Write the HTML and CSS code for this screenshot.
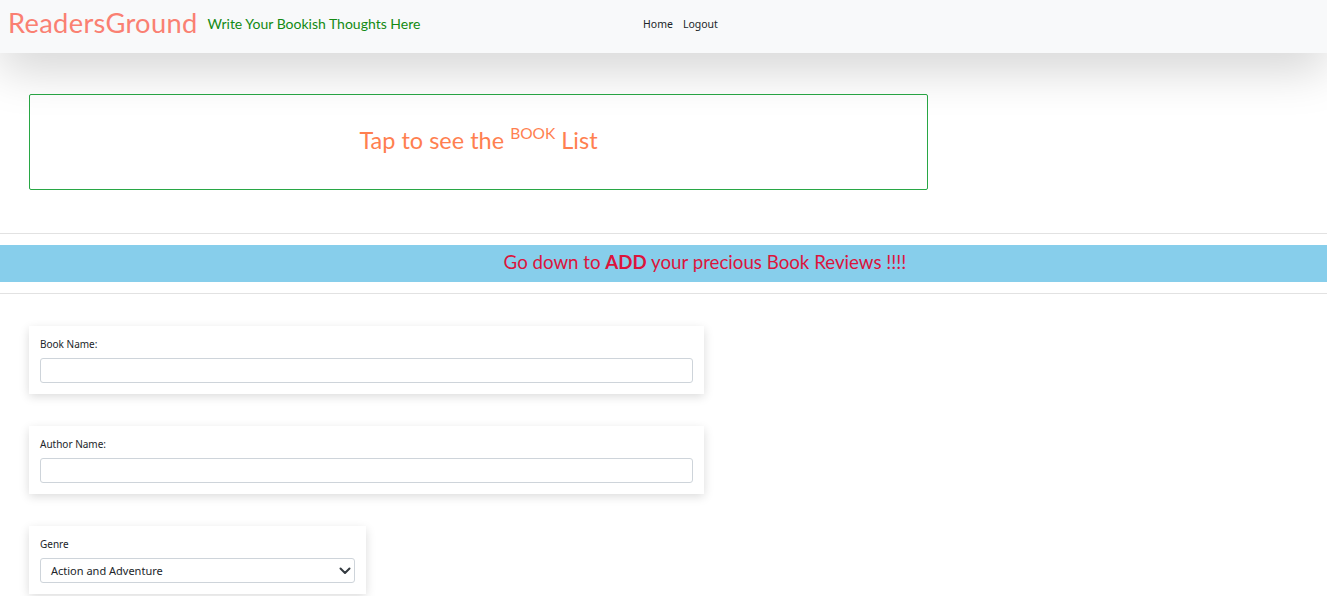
FILE: index.html
```html
<!DOCTYPE html>
<html>
<head>
<meta charset="utf-8">
<link rel="stylesheet" href="styles.css">
</head>
<body>
<nav class="navbar">
  <div class="brand-group">
    <span class="brand">ReadersGround</span>
    <span class="tagline">Write Your Bookish Thoughts Here</span>
  </div>
  <div class="nav-links">
    <a href="#">Home</a>
    <a href="#">Logout</a>
  </div>
</nav>
<main>
  <section class="list-box">
    <span class="list-text">Tap to see the <sup>BOOK</sup> List</span>
  </section>
  <hr class="rule">
  <div class="band"><span>Go down to <b>ADD</b> your precious Book Reviews !!!!</span></div>
  <hr class="rule rule2">
  <form class="form">
    <div class="card wide">
      <label>Book Name:</label>
      <input type="text">
    </div>
    <div class="card wide">
      <label>Author Name:</label>
      <input type="text">
    </div>
    <div class="card narrow">
      <label>Genre</label>
      <div class="select">
        <span>Action and Adventure</span>
        <svg width="12" height="8" viewBox="0 0 12 8"><path d="M1.5 1.5 L6 6 L10.5 1.5" fill="none" stroke="#343a40" stroke-width="2" stroke-linecap="round" stroke-linejoin="round"/></svg>
      </div>
    </div>
  </form>
</main>
</body>
</html>
```
FILE: styles.css
```css
html, body { margin: 0; padding: 0; background: #fff; }
body { font-family: "Open Sans", "Noto Sans", sans-serif; overflow: hidden; height: 596px; }
.navbar {
  height: 53px;
  background: #f8f9fa;
  display: flex;
  align-items: center;
  box-shadow: 0 1rem 3rem rgba(0,0,0,0.175);
  position: relative;
  z-index: 1;
}
.brand-group { display: flex; align-items: baseline; padding-left: 8px; width: 635px; }
.brand { font-family: "Comic Sans MS", "Lato", sans-serif; color: #fa8072; font-size: 27.3px; letter-spacing: 0.3px; margin-top: -8px; }
.tagline { font-family: "Comic Sans MS", "Lato", sans-serif; color: #138a13; font-size: 14px; margin-left: 10px; position: relative; top: -4px; }
.nav-links { display: flex; gap: 10px; margin-top: -5px; }
.nav-links a { color: #212529; text-decoration: none; font-size: 10.5px; font-family: "Noto Sans", sans-serif; }
main { padding-top: 41px; }
.list-box {
  margin-left: 29px;
  width: 897px;
  height: 94px;
  border: 1px solid #28a745;
  border-radius: 2px;
  display: flex;
  align-items: center;
  justify-content: center;
}
.list-text { font-family: "Comic Sans MS", "Lato", sans-serif; color: #ff7f50; font-size: 23.5px; margin-top: -4px; }
.list-text sup { font-size: 15.5px; vertical-align: 0; position: relative; top: -10px; }
.rule { border: 0; border-top: 1px solid #e2e2e2; margin: 43px 0 11px; }
.rule2 { margin: 11px 0 0; }
.band {
  background: #87ceeb;
  height: 37px;
  display: flex;
  align-items: center;
  justify-content: center;
  padding-left: 83px;
  font-family: "Comic Sans MS", "Lato", sans-serif;
  color: #dc143c;
  font-size: 18.7px;
}
.band span { position: relative; top: -2px; }
.band b { font-weight: 700; }
.form { padding: 32px 0 0 29px; display: flex; flex-direction: column; gap: 32px; }
.card {
  background: #fff;
  box-shadow: 0 0.2rem 0.6rem rgba(0,0,0,0.15);
  padding: 10px 11px 10px 11px;
  box-sizing: border-box;
  height: 68px;
}
.wide { width: 675px; }
.narrow { width: 337px; }
label { display: block; font-size: 10px; color: #212529; margin: 0 0 6px; height: 16px; line-height: 16px; font-family: "Noto Sans", sans-serif; }
input, .select {
  display: block;
  width: 100%;
  height: 25px;
  box-sizing: border-box;
  border: 1px solid #ced4da;
  border-radius: 3px;
  background: #fff;
}
.select { display: flex; align-items: center; justify-content: space-between; padding: 0 3px 0 10px; font-size: 11px; color: #212529; font-family: "Noto Sans", sans-serif; }
.select svg { margin-right: 0; }
```
